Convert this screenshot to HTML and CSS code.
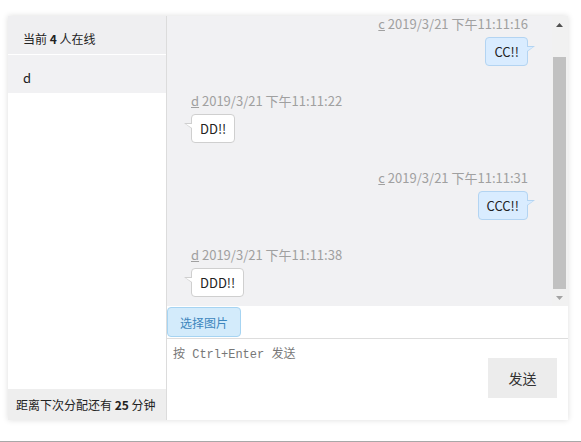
FILE: index.html
```html
<!DOCTYPE html>
<html lang="zh-CN">
<head>
<meta charset="utf-8">
<title>客服</title>
<link rel="stylesheet" href="styles.css">
</head>
<body>
<div class="chat">
  <aside class="side">
    <div class="side-head">当前 <b>4</b> 人在线</div>
    <div class="user active">d</div>
    <div class="user-list"></div>
    <div class="side-foot">距离下次分配还有 <b>25</b> 分钟</div>
  </aside>
  <main class="main">
    <div class="messages">
      <div class="viewport">
        <div class="msg-list">
          <div class="msg mine">
            <div class="meta"><u>c</u> 2019/3/21 下午11:11:16</div>
            <div class="bubble">CC!!</div>
          </div>
          <div class="msg theirs">
            <div class="meta"><u>d</u> 2019/3/21 下午11:11:22</div>
            <div class="bubble">DD!!</div>
          </div>
          <div class="msg mine">
            <div class="meta"><u>c</u> 2019/3/21 下午11:11:31</div>
            <div class="bubble">CCC!!</div>
          </div>
          <div class="msg theirs">
            <div class="meta"><u>d</u> 2019/3/21 下午11:11:38</div>
            <div class="bubble">DDD!!</div>
          </div>
        </div>
      </div>
      <div class="scrollbar" aria-hidden="true">
        <div class="sb-btn">
          <svg width="7" height="4" viewBox="0 0 7 4"><polygon points="0,4 3.5,0 7,4" fill="#505050"/></svg>
        </div>
        <div class="sb-track"><div class="sb-thumb"></div></div>
        <div class="sb-btn">
          <svg width="7" height="4" viewBox="0 0 7 4"><polygon points="0,0 7,0 3.5,4" fill="#a3a3a3"/></svg>
        </div>
      </div>
    </div>
    <div class="toolbar"><button class="pick">选择图片</button></div>
    <div class="composer">
      <textarea class="input" placeholder="按 Ctrl+Enter 发送"></textarea>
      <div class="send-row"><button class="send">发送</button></div>
    </div>
  </main>
</div>
<div class="bottom-line"></div>
</body>
</html>
```
FILE: styles.css
```css
html, body {
  margin: 0;
  padding: 0;
  background: #fff;
}
body {
  padding: 16px 8px 0;
  font-family: "Noto Sans CJK SC", "Noto Sans", sans-serif;
  color: #222;
  overflow: hidden;
}
.chat {
  display: flex;
  width: 560px;
  height: 404px;
  box-shadow: 0 0 6px rgba(0, 0, 0, 0.14);
  background: #fff;
}
.side {
  width: 159px;
  box-sizing: border-box;
  border-right: 1px solid #dcdcdc;
  display: flex;
  flex-direction: column;
  font-size: 12px;
}
.side-head {
  height: 31px;
  padding-top: 7px;
  line-height: 31px;
  padding-left: 15px;
  background: #efeff1;
  border-bottom: 1px solid #fff;
}
.side-head b { font-weight: 700; }
.user {
  height: 31px;
  padding-top: 7px;
  line-height: 31px;
  padding-left: 15px;
  background: #f1f1f3;
  font-size: 13px;
}
.user-list { flex: 1; }
.side-foot {
  height: 31px;
  line-height: 31px;
  padding-left: 8px;
  background: #eeeeee;
}
.side-foot b { font-weight: 700; }
.main {
  flex: 1;
  display: flex;
  flex-direction: column;
  min-width: 0;
}
.messages {
  height: 290px;
  background: #f1f1f3;
  display: flex;
}
.viewport {
  flex: 1;
  min-width: 0;
  display: flex;
  flex-direction: column;
  justify-content: flex-end;
}
.msg-list {
  padding: 0 24px 9px 24px;
  display: flex;
  flex-direction: column;
  gap: 28px;
}
.msg {
  display: flex;
  flex-direction: column;
  gap: 6px;
}
.mine { align-items: flex-end; }
.theirs { align-items: flex-start; }
.meta {
  font-size: 13px;
  line-height: 14px;
  color: #a0a0a0;
}
.meta u { text-decoration: underline; }
.bubble {
  position: relative;
  font-size: 13px;
  line-height: 19px;
  padding: 4px 8px;
  border-radius: 4px;
  border: 1px solid #cfcfcf;
  background: #fff;
  color: #222;
}
.mine .bubble {
  background: #d9ecff;
  border-color: #b3d4f2;
}
.bubble::before,
.bubble::after {
  content: "";
  position: absolute;
  width: 0;
  height: 0;
}
.mine .bubble::before {
  right: -8px;
  top: 8px;
  border-top: 6px solid #b3d4f2;
  border-right: 8px solid transparent;
}
.mine .bubble::after {
  right: -6px;
  top: 9px;
  border-top: 4px solid #d9ecff;
  border-right: 6px solid transparent;
}
.theirs .bubble::before {
  left: -8px;
  top: 8px;
  border-top: 6px solid #cfcfcf;
  border-left: 8px solid transparent;
}
.theirs .bubble::after {
  left: -6px;
  top: 9px;
  border-top: 4px solid #fff;
  border-left: 6px solid transparent;
}
.scrollbar {
  width: 16px;
  display: flex;
  flex-direction: column;
  background: #f1f1f1;
}
.sb-btn {
  height: 17px;
  display: flex;
  align-items: center;
  justify-content: center;
  padding-right: 1px;
}
.sb-btn svg { display: block; }
.sb-track {
  flex: 1;
  display: flex;
  flex-direction: column;
  padding: 24px 2px 0 1px;
}
.sb-thumb {
  flex: 1;
  background: #c1c1c1;
}
.toolbar {
  height: 31px;
  padding-top: 1px;
  border-bottom: 1px solid #dddddd;
  background: #fff;
}
.pick {
  display: block;
  width: 74px;
  height: 30px;
  margin: 0;
  padding: 0;
  border: 1px solid #a6d4f2;
  border-radius: 4px;
  background: #d3ebfb;
  color: #3d86bd;
  font-family: "Noto Sans CJK SC", sans-serif;
  font-size: 12px;
}
.composer {
  flex: 1;
  display: flex;
  flex-direction: column;
  background: #fff;
}
.input {
  display: block;
  height: 20px;
  margin: 0;
  padding: 8px 5px 0 6px;
  border: 0;
  outline: none;
  resize: none;
  font-family: "Liberation Mono", "Noto Sans CJK SC", monospace;
  font-size: 12px;
  line-height: 16px;
  background: transparent;
}
.input::placeholder { color: #777; }
.send-row {
  display: flex;
  justify-content: flex-end;
  padding-right: 11px;
  margin-top: -9px;
}
.send {
  width: 69px;
  height: 40px;
  border: 0;
  margin: 0;
  padding: 0;
  background: #ececec;
  color: #333;
  font-family: "Noto Sans CJK SC", sans-serif;
  font-size: 14px;
}
.bottom-line {
  margin: 21px -8px 0;
  height: 2px;
  background: #a8a8a8;
}
```
